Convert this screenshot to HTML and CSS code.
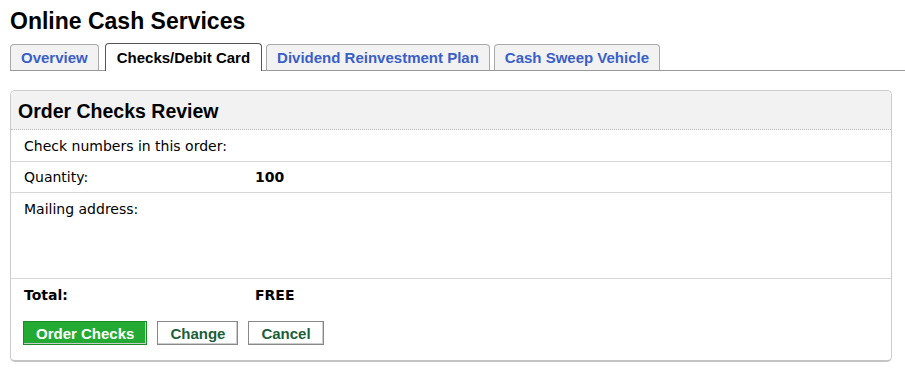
FILE: index.html
```html
<!DOCTYPE html>
<html lang="en">
<head>
  <meta charset="utf-8">
  <title>Online Cash Services</title>
  <link rel="stylesheet" href="styles.css">
</head>
<body>

<h1 class="page-title">Online Cash Services</h1>

<!-- ───────── tabs ───────── -->
<nav class="tabs">
  <a class="tab" href="#">Overview</a>
  <a class="tab active" href="#">Checks/Debit Card</a>
  <a class="tab" href="#">Dividend Reinvestment Plan</a>
  <a class="tab" href="#">Cash Sweep Vehicle</a>
</nav>

<!-- ───────── review panel ───────── -->
<section class="panel">
  <h2 class="panel-head">Order Checks Review</h2>

  <div class="row first">
    <span class="label">Check numbers in this order:</span>
  </div>
  <div class="row">
    <span class="label">Quantity:</span>
    <span class="value">100</span>
  </div>
  <div class="row tall">
    <span class="label">Mailing address:</span>
  </div>
  <div class="row last">
    <span class="label bold">Total:</span>
    <span class="value">FREE</span>
  </div>

  <div class="actions">
    <button class="btn primary">Order Checks</button>
    <button class="btn">Change</button>
    <button class="btn">Cancel</button>
  </div>
</section>

</body>
</html>
```

FILE: styles.css
```css
body {margin:0;padding:9px 0 0 10px;background:#fff;
      font-family:"Liberation Sans", Arial, sans-serif;color:#000}

.page-title {margin:0;font-size:23px;line-height:24px;font-weight:bold}

/* tabs */
.tabs  {display:flex;gap:4px;margin-top:11px;
        border-bottom:1px solid #999;height:26px;align-items:flex-end}
.tab   {display:block;height:25px;line-height:25px;padding:0 10px;
        background:#f2f2f2;border:1px solid #aaa;border-bottom:none;
        border-radius:4px 4px 0 0;font-size:15px;font-weight:bold;
        color:#3a5fc8;text-decoration:none}
.tab.active {background:#fff;color:#000;border-color:#555;height:27px;
             line-height:27px;margin:0 0 -1px 2px;padding:0 11px}

/* panel */
.panel {width:880px;margin-top:19px;border:1px solid #ccc;
        border-bottom:2px solid #c4c4c4;border-radius:5px;
        font-family:"DejaVu Sans", Verdana, sans-serif;font-size:14px}
.panel-head {margin:0;padding:0 7px;height:38px;line-height:41px;
             background:#f2f2f2;border-bottom:1px dotted #bbb;
             border-radius:5px 5px 0 0;
             font-family:"Liberation Sans", Arial, sans-serif;font-size:19.5px}
.row   {display:flex;height:30px;align-items:center;padding:0 13px;
        border-bottom:1px solid #d8d8d8}
.row.first {height:31px}
.row.tall {height:85px;align-items:flex-start}
.row.tall .label {margin-top:8px}
.row.last {border-bottom:none;height:31px}
.label {width:231px}
.bold, .value {font-weight:bold}

/* buttons */
.actions {display:flex;gap:10px;padding:11px 12px 15px}
.btn   {height:24px;padding:0 12px;background:#fff;border:1px solid #888;
        box-shadow:inset -1px -1px 0 #ccc;
        font-family:"Liberation Sans", Arial, sans-serif;font-size:15px;
        font-weight:bold;color:#1b5e3b;cursor:pointer}
.btn.primary {background:#22aa33;color:#fff;border-color:#1c8a2a}
```
